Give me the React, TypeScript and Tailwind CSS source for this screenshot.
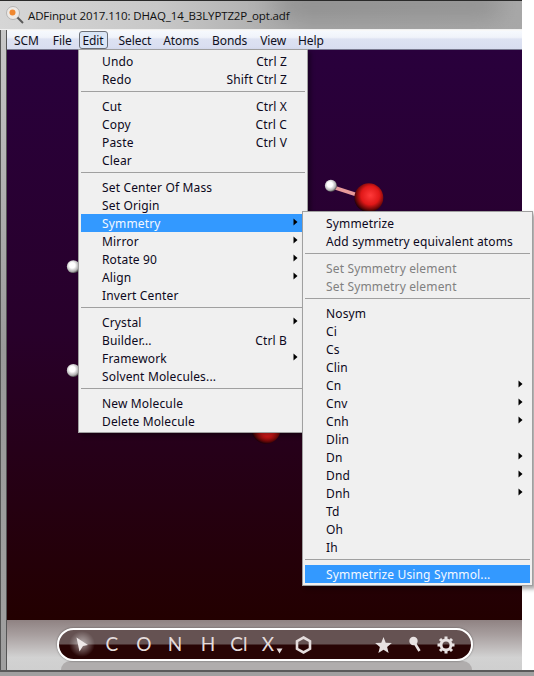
import React from "react";

type Item =
  | { sep: true }
  | { label: string; short?: string; arrow?: boolean; active?: boolean; disabled?: boolean };

const S: Item = { sep: true };

const editMenu: Item[] = [
  { label: "Undo", short: "Ctrl Z" },
  { label: "Redo", short: "Shift Ctrl Z" },
  S,
  { label: "Cut", short: "Ctrl X" },
  { label: "Copy", short: "Ctrl C" },
  { label: "Paste", short: "Ctrl V" },
  { label: "Clear" },
  S,
  { label: "Set Center Of Mass" },
  { label: "Set Origin" },
  { label: "Symmetry", arrow: true, active: true },
  { label: "Mirror", arrow: true },
  { label: "Rotate 90", arrow: true },
  { label: "Align", arrow: true },
  { label: "Invert Center" },
  S,
  { label: "Crystal", arrow: true },
  { label: "Builder...", short: "Ctrl B" },
  { label: "Framework", arrow: true },
  { label: "Solvent Molecules..." },
  S,
  { label: "New Molecule" },
  { label: "Delete Molecule" },
];

const symMenu: Item[] = [
  { label: "Symmetrize" },
  { label: "Add symmetry equivalent atoms" },
  S,
  { label: "Set Symmetry element", disabled: true },
  { label: "Set Symmetry element", disabled: true },
  S,
  { label: "Nosym" },
  { label: "Ci" },
  { label: "Cs" },
  { label: "Clin" },
  { label: "Cn", arrow: true },
  { label: "Cnv", arrow: true },
  { label: "Cnh", arrow: true },
  { label: "Dlin" },
  { label: "Dn", arrow: true },
  { label: "Dnd", arrow: true },
  { label: "Dnh", arrow: true },
  { label: "Td" },
  { label: "Oh" },
  { label: "Ih" },
  S,
  { label: "Symmetrize Using Symmol...", active: true },
];

function Arrow() {
  return (
    <svg width="5" height="8" viewBox="0 0 5 8" className="absolute right-[7px] top-[4px]">
      <path d="M0.5 0.5 L4.5 4 L0.5 7.5 Z" fill="#000000" />
    </svg>
  );
}

function Menu({ items, className, indent }: { items: Item[]; className: string; indent: string }) {
  return (
    <div
      className={`absolute z-10 flex flex-col border border-[#a0a0a0] bg-[#f0f0f0] p-[2px] shadow-[3px_3px_4px_rgba(0,0,0,0.35)] ${className}`}
    >
      {items.map((it, i) =>
        "sep" in it ? (
          <div key={i} className="h-[9px] pt-[3px]">
            <div className="h-px bg-[#a0a0a0]" />
          </div>
        ) : (
          <div
            key={i}
            className={`relative flex h-[18px] items-center justify-between whitespace-nowrap pr-[18px] pt-[2px] ${indent} ${
              it.active ? "bg-[#3399ff] text-[#f4f8ff]" : it.disabled ? "text-[#808080]" : "text-[#0c0820]"
            }`}
          >
            <span>{it.label}</span>
            {it.short && <span>{it.short}</span>}
            {it.arrow && <Arrow />}
          </div>
        )
      )}
    </div>
  );
}

function Molecule() {
  return (
    <svg className="absolute inset-0 h-full w-full" viewBox="0 0 515 571">
      <defs>
        <radialGradient id="w" cx="0.42" cy="0.4" r="0.6">
          <stop offset="0.35" stopColor="#ffffff" />
          <stop offset="0.8" stopColor="#b0b0b0" />
          <stop offset="1" stopColor="#505050" />
        </radialGradient>
        <radialGradient id="r" cx="0.55" cy="0.42" r="0.58">
          <stop offset="0" stopColor="#ff3a3a" />
          <stop offset="0.55" stopColor="#e01818" />
          <stop offset="0.85" stopColor="#6a0808" />
          <stop offset="1" stopColor="#200008" />
        </radialGradient>
      </defs>
      <line x1="325" y1="137" x2="356" y2="147" stroke="#e89a9a" strokeWidth="3.5" />
      <circle cx="324" cy="136" r="6" fill="url(#w)" />
      <circle cx="362" cy="148" r="14.5" fill="url(#r)" />
      <circle cx="66" cy="217" r="6.5" fill="url(#w)" />
      <circle cx="66" cy="321" r="6.5" fill="url(#w)" />
      <circle cx="259" cy="380" r="14.5" fill="url(#r)" />
    </svg>
  );
}

function Letter({ children, w }: { children: React.ReactNode; w: string }) {
  return <span className={`relative flex h-full shrink-0 items-center justify-center ${w}`}>{children}</span>;
}

function Toolbar() {
  return (
    <div className="relative h-[50px] bg-[linear-gradient(#8f8282,#a89f9f_30%,#d2d2d2_75%,#cfcfcf)]">
      <div className="absolute bottom-0 left-[54px] right-[50px] h-[9px] rounded-t-[14px] bg-[#b0adad]" />
      <div className="absolute left-[50px] top-[8px] flex h-[33px] w-[416px] items-center overflow-hidden rounded-full border-2 border-white bg-[linear-gradient(#655252_0,#655252_48%,#280404_52%,#280404_100%)] pl-[7px] font-['Lato',sans-serif] text-[19px] text-[#e4dcdc] shadow-[0_0_2px_rgba(0,0,0,0.5)]">
        <Letter w="w-[32px]">
          <span className="absolute left-[2px] top-[0px] h-[28px] w-[28px] rounded-full bg-[radial-gradient(rgba(255,255,255,0.55),rgba(255,255,255,0)_65%)]" />
          <svg width="14" height="15" viewBox="0 0 14 15" className="relative">
            <path d="M1.5 0.5 L13 8 L8 9 L4.5 14.5 Z" fill="#f0eaea" />
          </svg>
        </Letter>
        <Letter w="w-[28px]">C</Letter>
        <Letter w="w-[36px]">O</Letter>
        <Letter w="w-[26px]">N</Letter>
        <Letter w="w-[40px]">H</Letter>
        <Letter w="w-[22px]">Cl</Letter>
        <Letter w="w-[36px]">
          X
          <svg width="7" height="6" viewBox="0 0 7 6" className="absolute left-[26px] top-[18px]">
            <path d="M0.5 0.5 H6.5 L3.5 5.5 Z" fill="#e4dcdc" />
          </svg>
        </Letter>
        <Letter w="w-[34px]">
          <svg width="17" height="18" viewBox="0 0 17 18">
            <path d="M8.5 1.5 L15 5.2 V12.8 L8.5 16.5 L2 12.8 V5.2 Z" fill="none" stroke="#e4dcdc" strokeWidth="2.6" />
          </svg>
        </Letter>
        <span className="w-[48px] shrink-0" />
        <Letter w="w-[30px]">
          <svg width="17" height="16" viewBox="0 0 24 23">
            <path d="M12 0 L15.2 8.2 L24 8.8 L17.2 14.4 L19.4 23 L12 18.2 L4.6 23 L6.8 14.4 L0 8.8 L8.8 8.2 Z" fill="#e8e2e2" />
          </svg>
        </Letter>
        <Letter w="w-[34px]">
          <svg width="14" height="17" viewBox="0 0 14 17">
            <line x1="6" y1="6" x2="11.5" y2="15" stroke="#e8e2e2" strokeWidth="2.6" />
            <circle cx="5.5" cy="5" r="4.2" fill="#e8e2e2" />
          </svg>
        </Letter>
        <Letter w="w-[28px]">
          <svg width="18" height="18" viewBox="0 0 18 18">
            <circle cx="9" cy="9" r="5" fill="none" stroke="#e8e2e2" strokeWidth="3" />
            <g stroke="#e8e2e2" strokeWidth="3">
              <line x1="9" y1="0.5" x2="9" y2="4" />
              <line x1="9" y1="14" x2="9" y2="17.5" />
              <line x1="0.5" y1="9" x2="4" y2="9" />
              <line x1="14" y1="9" x2="17.5" y2="9" />
              <line x1="3" y1="3" x2="5.3" y2="5.3" />
              <line x1="12.7" y1="12.7" x2="15" y2="15" />
              <line x1="15" y1="3" x2="12.7" y2="5.3" />
              <line x1="5.3" y1="12.7" x2="3" y2="15" />
            </g>
          </svg>
        </Letter>
      </div>
    </div>
  );
}

export default function App() {
  return (
    <div className="relative flex h-[676px] w-[534px] flex-col overflow-hidden bg-white font-['Noto_Sans',sans-serif] text-[12px] tracking-[0.15px]">
      <div className="relative flex h-[30px] w-[522px] shrink-0 items-center overflow-hidden border-t border-[#2a2a2a] bg-[linear-gradient(90deg,#d6d6d6,#c8c8c8_30%,#a4a4a4_60%,#a8a8a8)] pl-[6px]">
        <div className="absolute right-[20px] top-[-6px] h-[20px] w-[230px] rounded-full bg-[#787878] opacity-60 blur-md" />
        <div className="absolute bottom-0 left-0 right-0 h-px bg-[#f0f0f0]" />
        <svg width="21" height="20" viewBox="0 0 21 20" className="relative shrink-0">
          <circle cx="7" cy="7" r="6.5" fill="#eeeae6" stroke="#b4b4b4" />
          <circle cx="6.5" cy="6.5" r="3" fill="#f08830" />
          <line x1="11.5" y1="11.5" x2="17" y2="17" stroke="#5a5a5a" strokeWidth="2" />
        </svg>
        <span className="relative ml-[1px] font-['Open_Sans',sans-serif] text-[11.5px] tracking-[-0.13px] text-[#101010]">
          ADFinput 2017.110: DHAQ_14_B3LYPTZ2P_opt.adf
        </span>
      </div>

      <div className="flex min-h-0 w-[522px] flex-1">
        <div className="w-[7px] shrink-0 border-x border-x-[#555555] bg-[linear-gradient(#c8c8c8,#9a9a9a_50%,#a0a0a0)]" />
        <div className="flex min-w-0 flex-1 flex-col">
          <div className="flex h-[20px] shrink-0 items-center border-y border-t-[#f8f8f8] border-b-[#7a7a90] bg-[linear-gradient(#f6f9fd,#f0f3fa_35%,#dde2f2_45%,#d8ddf0)] pl-[7px] tracking-[-0.1px] text-[#101020]">
            <span className="pt-[2px]">SCM</span>
            <span className="ml-[14px] pt-[2px]">File</span>
            <span className="ml-[7px] flex h-[18px] w-[29px] items-center justify-center rounded-[3px] border border-[#6c7078] bg-[#dbe6f6] pt-[2px]">Edit</span>
            <span className="ml-[11px] pt-[2px]">Select</span>
            <span className="ml-[12px] pt-[2px]">Atoms</span>
            <span className="ml-[13px] pt-[2px]">Bonds</span>
            <span className="ml-[13px] pt-[2px]">View</span>
            <span className="ml-[12px] pt-[2px]">Help</span>
          </div>
          <div className="relative min-h-0 flex-1 overflow-hidden bg-[linear-gradient(#29003c,#28002a_50%,#230000)]">
            <Molecule />
          </div>
          <Toolbar />
        </div>
      </div>

      <div className="h-[6px] w-full shrink-0 border-t-2 border-[#5a5a5a] bg-[#a0a0a0]" />

      <Menu items={editMenu} indent="pl-[21px]" className="left-[78px] top-[49px] w-[230px]" />
      <Menu items={symMenu} indent="pl-[21px]" className="left-[302px] top-[211px] w-[231px]" />
    </div>
  );
}
